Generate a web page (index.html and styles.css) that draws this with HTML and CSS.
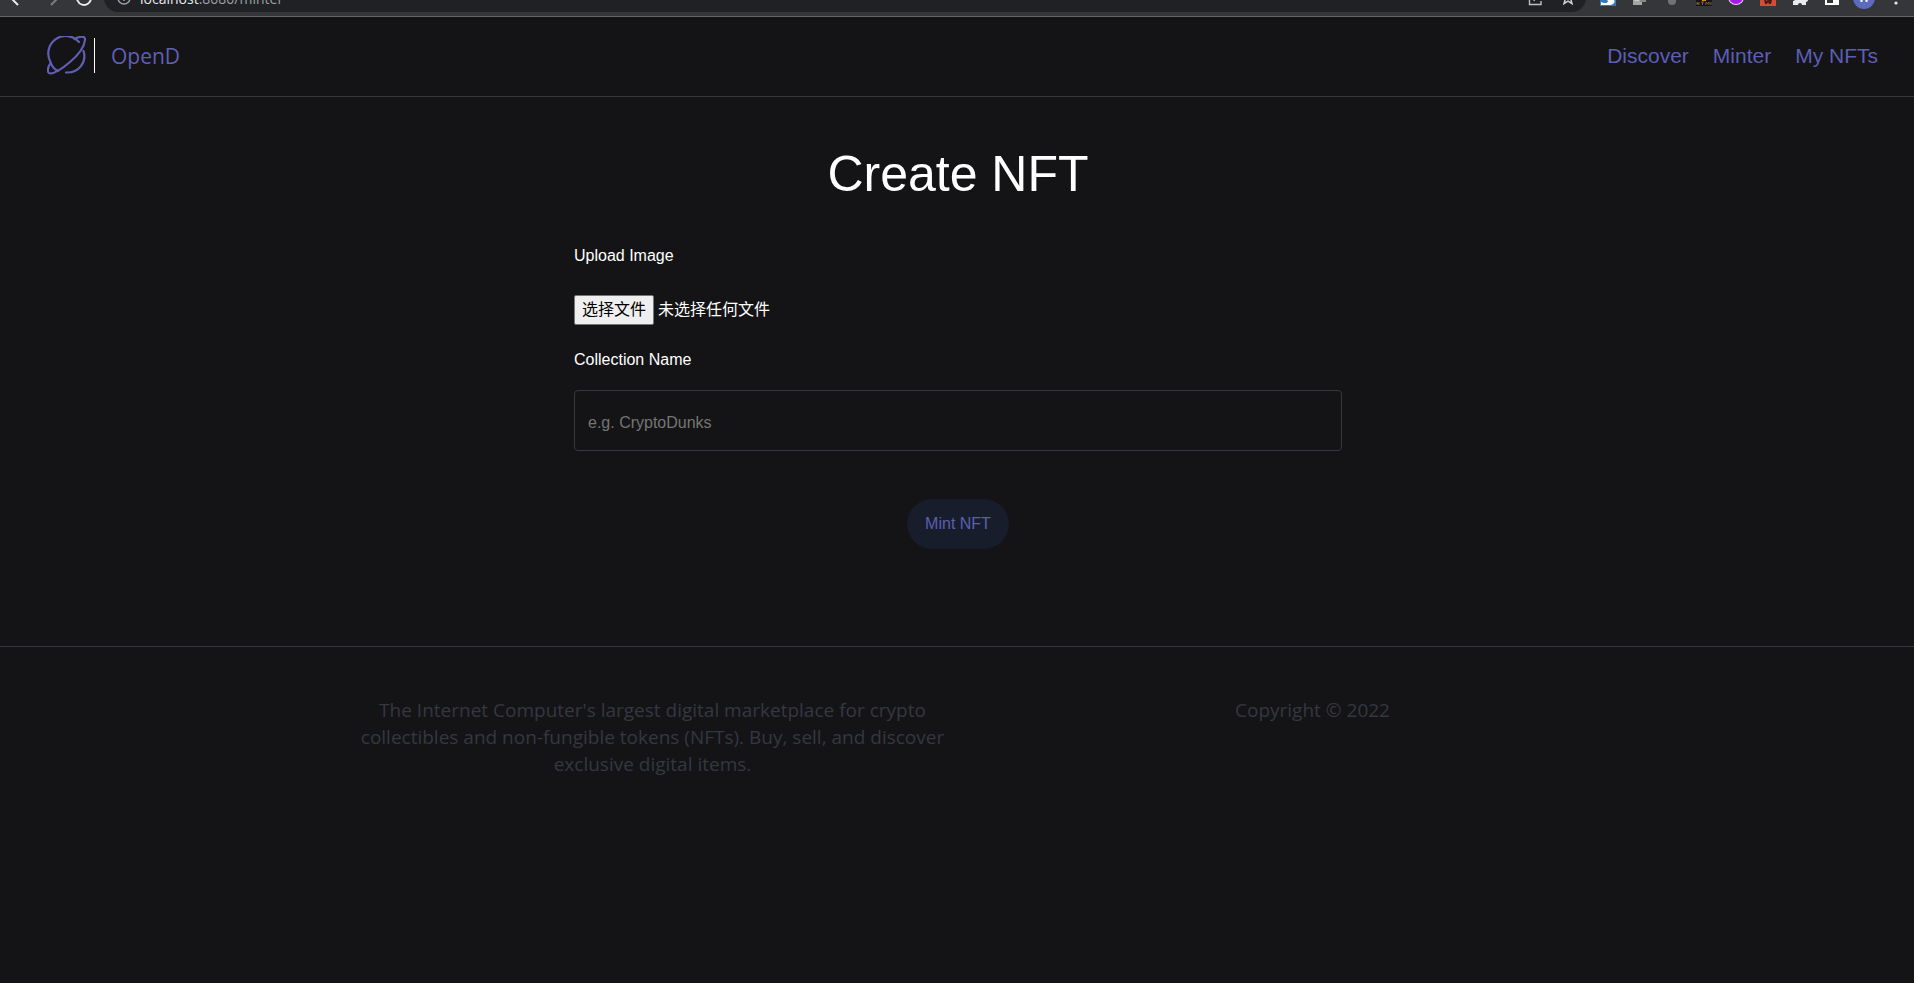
FILE: index.html
```html
<!DOCTYPE html>
<html lang="en">
<head>
<meta charset="utf-8">
<title>OpenD</title>
<link rel="stylesheet" href="styles.css">
</head>
<body>
<div class="browser">
  <div class="toolbar">
    <div class="nav-icons">
      <svg class="icon" viewBox="0 0 20 20"><path d="M18 10H3M10 3l-7 7 7 7" fill="none" stroke="#e8eaed" stroke-width="2"/></svg>
      <svg class="icon" viewBox="0 0 20 20"><path d="M2 10h15M10 3l7 7-7 7" fill="none" stroke="#7c7e82" stroke-width="2"/></svg>
      <svg class="icon" viewBox="0 0 20 20"><path d="M15 5a7 7 0 1 0 2 5M16 2v5h-5" fill="none" stroke="#e8eaed" stroke-width="2"/></svg>
    </div>
    <div class="address">
      <svg class="icon info" viewBox="0 0 20 20"><circle cx="10" cy="10" r="6" fill="none" stroke="#9aa0a6" stroke-width="1.5"/><path d="M10 9v4M10 6v2" stroke="#9aa0a6" stroke-width="1.6"/></svg>
      <span class="url"><b>localhost</b>:8080/minter</span>
      <svg class="icon" viewBox="0 0 20 20"><path d="M7 5H4.500v11.500h11.500V13M9 13c1-4 3-5 6-5M12 4l3 3-3 3" fill="none" stroke="#bdc1c6" stroke-width="1.400"/></svg>
      <svg class="icon" viewBox="0 0 20 20"><path d="M10 4l1.800 4 4.200.4-3.200 2.800 1.200 4.500-4-2.500-4 2.500 1.200-4.500L4 8.400 8.200 8z" fill="none" stroke="#d0d3d7" stroke-width="1.500"/></svg>
    </div>
    <div class="extensions">
      <svg class="icon" viewBox="0 0 20 20"><path d="M2 2h16v16H2z" fill="#2b7cc0"/><path d="M3 17v-3c4 2 7 1 7-1-1-2-4-1-5-3h9c4 2 3 6-1 7z" fill="#fff"/></svg>
      <svg class="icon" viewBox="0 0 20 20"><path d="M3 6h9v11H3z" fill="#a6a6a6"/><path d="M10 9h6v5h-6z" fill="#888"/><path d="M5 9h4v4H5z" fill="#ccc"/></svg>
      <svg class="icon" viewBox="0 0 20 20"><path d="M6 4h8v9a4 4 0 0 1-8 0z" fill="#707275"/></svg>
      <svg class="icon" viewBox="0 0 20 20"><path d="M2 11h16v7H2z" fill="#171513"/><path d="M3 14v3M5 14v3M3 15.500h2M7 14h3M8.500 14v3M12 17v-3l1.500 1.500L15 14v3M17 14v3" fill="none" stroke="#806044"/><path d="M8 10h4v3H8z" fill="#e58a19"/></svg>
      <svg class="icon" viewBox="0 0 20 20"><circle cx="10" cy="9" r="8" fill="#f1c6ff"/><circle cx="10" cy="9" r="7" fill="#a51ae8"/></svg>
      <svg class="icon" viewBox="0 0 20 20"><path d="M2 2h16v16H2z" fill="#d64a38"/><path d="M6 11l3 2 1-2 4 1-1 4h-2l-1-2-1 2H7z" fill="#4a1714"/></svg>
      <svg class="icon" viewBox="0 0 20 20"><path d="M3 6h4a2 2 0 0 1 5 0h4v4a2 2 0 0 1 0 4v3h-4a2 2 0 0 0-4 0H3v-4a2 2 0 0 0 0-4z" fill="#e8eaed"/></svg>
      <svg class="icon" viewBox="0 0 20 20"><path d="M3 3h14v14H3z" fill="#fff"/><path d="M5 6h6v9H5z" fill="#35363a"/></svg>
      <span class="avatar">W</span>
      <svg class="icon" viewBox="0 0 20 20"><circle cx="10" cy="5" r="1.600" fill="#e8eaed"/><circle cx="10" cy="10" r="1.600" fill="#e8eaed"/><circle cx="10" cy="15" r="1.600" fill="#e8eaed"/></svg>
    </div>
  </div>
</div>

<header class="header">
  <div class="brand">
    <svg class="logo" viewBox="0 0 40 40" fill="none" stroke="#605fb4" stroke-width="2.200" stroke-linecap="round">
      <path d="M32 6A17.500 17.500 0 0 0 3.500 26Q5 32 11 35"/>
      <path d="M36.500 15C40 26 32 37 19 36.500"/>
      <path d="M27.500 3C33 0 38.500-.5 38 4 37 13 29 21 23 26 16 32 9 37 3.500 37.500-1 37 1 31 3.500 27"/>
    </svg>
    <span class="rule"></span>
    <span class="brand-name">OpenD</span>
  </div>
  <nav class="links">
    <a href="#discover">Discover</a>
    <a href="#minter">Minter</a>
    <a href="#nfts">My NFTs</a>
  </nav>
</header>

<main class="minter">
  <h1 class="title">Create NFT</h1>
  <form class="form">
    <label class="label" for="image">Upload Image</label>
    <div class="file">
      <input class="file-input" type="file" id="image">
      <label class="file-picker" for="image"><span class="file-button">选择文件</span><span class="file-status">未选择任何文件</span></label>
    </div>
    <label class="label" for="name">Collection Name</label>
    <input class="text-input" type="text" id="name" placeholder="e.g. CryptoDunks">
    <button class="mint" type="button">Mint NFT</button>
  </form>
</main>

<footer class="footer">
  <div class="footer-grid">
    <p class="about">The Internet Computer's largest digital marketplace for crypto collectibles and non-fungible tokens (NFTs). Buy, sell, and discover exclusive digital items.</p>
    <p>Copyright © 2022</p>
  </div>
</footer>
</body>
</html>
```
FILE: styles.css
```css
* { box-sizing: border-box; }

body {
  margin: 0;
  min-height: 100vh;
  background: #141416;
  color: #fff;
  font-family: "Liberation Sans", "Noto Sans CJK SC", sans-serif;
  font-size: 16px;
}

/* Browser toolbar, only its lower edge is in view */
.browser {
  display: flex;
  align-items: flex-end;
  height: 17px;
  overflow: hidden;
  background: #35363a;
  border-bottom: 1px solid #656568;
}

.toolbar {
  display: flex;
  flex: 1;
  align-items: center;
  padding: 0 8px 4px;
}

.icon { flex: none; width: 20px; height: 20px; }

.nav-icons { display: flex; gap: 13px; padding-right: 10px; }

.address {
  display: flex;
  flex: 1;
  align-items: center;
  gap: 13px;
  height: 28px;
  padding: 0 8px 0 10px;
  border-radius: 14px;
  background: #202124;
}

.info { margin-right: -7px; }

.url { flex: 1; color: #9aa0a6; font-family: "Open Sans", sans-serif; font-size: 14px; }
.url b { color: #e8eaed; font-weight: 400; }

.extensions { display: flex; align-items: center; gap: 12px; padding-left: 12px; }

.avatar {
  width: 22px;
  height: 22px;
  margin: 0 -1px;
  border-radius: 50%;
  background: #5c6bc0;
  font-size: 12px;
  line-height: 22px;
  text-align: center;
}

.header {
  display: flex;
  align-items: center;
  justify-content: space-between;
  height: 80px;
  padding: 0 36px 2px 47px;
  border-bottom: 1px solid #38383d;
}

.brand { display: flex; align-items: center; }
.logo { width: 40px; height: 40px; }
.rule { width: 1px; height: 35px; margin: 0 16px 0 7px; background: #fff; }
.brand-name { color: #605fb4; font-family: "Open Sans", sans-serif; font-size: 21px; }

.links { display: flex; gap: 24px; font-size: 21px; }
.links a { color: #5c5eb4; text-decoration: none; }

.minter {
  display: flex;
  flex-direction: column;
  align-items: center;
  padding: 49px 24px 97px 26px;
}

.title { margin: 0; font-size: 50px; font-weight: 400; line-height: 56px; }

.form {
  display: flex;
  flex-direction: column;
  width: 100%;
  max-width: 768px;
  padding-top: 42px;
}

.label { line-height: 24px; }

.file { position: relative; margin: 27px 0 23px; }
.file-input { position: absolute; width: 1px; height: 1px; opacity: 0; }
.file-picker { display: flex; gap: 4px; }

.file-button {
  height: 30px;
  padding: 0 7px;
  border: 1px solid #767676;
  border-radius: 2px;
  background: #efefef;
  color: #000;
  line-height: 28px;
}

.file-status { line-height: 30px; }

.text-input {
  height: 61px;
  margin: 18px 0 48px;
  padding: 4px 13px 0;
  border: 1px solid #38373f;
  border-radius: 4px;
  background: transparent;
  color: #fff;
  font: inherit;
}
.text-input::placeholder { color: #757575; }

.mint {
  align-self: center;
  height: 50px;
  padding: 0 18px;
  border: 0;
  border-radius: 25px;
  background: #181d2c;
  color: #5c5eb4;
  font: inherit;
}

.footer {
  padding: 50px 0 48px 51px;
  border-top: 1px solid #38373f;
  color: #353741;
  font-family: "Open Sans", sans-serif;
  font-size: 19px;
  line-height: 27px;
  text-align: center;
}

.footer-grid {
  display: grid;
  grid-template-columns: 1fr 1fr;
  max-width: 1320px;
  margin: 0 auto;
}

.footer p { margin: 0; }
.footer .about { max-width: 610px; margin: 0 auto; }
```
